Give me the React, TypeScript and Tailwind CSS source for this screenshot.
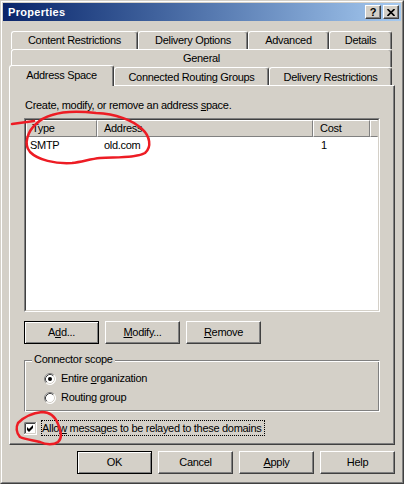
import React from "react";

const raised =
  "border border-t-white border-l-white border-r-[#404040] border-b-[#404040] shadow-[inset_-1px_-1px_0_#808080]";
const defBtn =
  "border border-black shadow-[inset_1px_1px_0_#ffffff,inset_-1px_-1px_0_#808080]";

function Btn({ children, def }: { children: React.ReactNode; def?: boolean }) {
  return (
    <div
      className={`w-[75px] h-[23px] shrink-0 flex items-center justify-center bg-[#d4d0c8] ${
        def ? defBtn : raised
      }`}
    >
      <span>{children}</span>
    </div>
  );
}

function Tab({
  children,
  className,
}: {
  children: React.ReactNode;
  className: string;
}) {
  return (
    <div
      className={`shrink-0 flex justify-center bg-[#d4d0c8] border-t border-l border-r border-t-white border-l-white border-r-[#404040] shadow-[inset_-1px_0_0_#808080] rounded-t-[3px] ${className}`}
    >
      <span>{children}</span>
    </div>
  );
}

function Radio({ checked }: { checked?: boolean }) {
  return (
    <svg width="12" height="12" viewBox="0 0 12 12" className="shrink-0">
      <circle cx="6" cy="6" r="5.5" fill="#ffffff" />
      <path d="M2.11 9.89 A5.5 5.5 0 0 1 9.89 2.11" stroke="#808080" fill="none" />
      <path d="M9.89 2.11 A5.5 5.5 0 0 1 2.11 9.89" stroke="#ffffff" fill="none" />
      <path d="M2.82 9.18 A4.5 4.5 0 0 1 9.18 2.82" stroke="#404040" fill="none" />
      <path d="M9.18 2.82 A4.5 4.5 0 0 1 2.82 9.18" stroke="#d4d0c8" fill="none" />
      {checked && <circle cx="6" cy="6" r="2" fill="#000000" />}
    </svg>
  );
}

function Check() {
  return (
    <svg width="13" height="13" viewBox="0 0 13 13" className="shrink-0">
      <rect x="0" y="0" width="13" height="13" fill="#ffffff" />
      <path d="M0.5 12 V0.5 H12" stroke="#808080" fill="none" />
      <path d="M1.5 11 V1.5 H11" stroke="#404040" fill="none" />
      <path d="M0 12.5 H12.5 V0" stroke="#ffffff" fill="none" />
      <path d="M1 11.5 H11.5 V1" stroke="#d4d0c8" fill="none" />
      <path d="M3 5 L5 7 L9 3 L9 6 L5 10 L3 8 Z" fill="#000000" />
    </svg>
  );
}

export default function App() {
  return (
    <div className="relative w-[404px] h-[484px] bg-[#d4d0c8] text-black text-[11px] leading-[13px] tracking-[-0.3px] font-['Liberation_Sans',Arial,sans-serif]">
      <div className="w-full h-full border border-t-[#d4d0c8] border-l-[#d4d0c8] border-r-[#404040] border-b-[#404040]">
        <div className="w-full h-full border border-t-white border-l-white border-r-[#808080] border-b-[#808080] p-px flex flex-col">
          {/* Title bar */}
          <div className="h-[18px] shrink-0 flex items-center bg-linear-to-r from-[#0a246a] to-[#a6caf0] pl-[5px] pr-[2px]">
            <span className="text-white font-bold tracking-[0.3px]">Properties</span>
            <div className="ml-auto flex gap-[2px]">
              <div className={`w-[16px] h-[14px] flex items-center justify-center bg-[#d4d0c8] ${raised}`}>
                <span className="font-bold text-[11px] leading-[11px] tracking-normal">?</span>
              </div>
              <div className={`w-[16px] h-[14px] flex items-center justify-center bg-[#d4d0c8] ${raised}`}>
                <svg width="8" height="7" viewBox="0 0 8 7">
                  <path d="M0.5 0 L7.5 7 M7.5 0 L0.5 7" stroke="#000" strokeWidth="1.6" />
                </svg>
              </div>
            </div>
          </div>

          {/* Content */}
          <div className="flex-1 flex flex-col px-[6px] pt-[10px]">
            {/* Tab row 1 */}
            <div className="flex h-[18px] ml-[2px]">
              <Tab className="w-[127px] h-[18px] items-center">Content Restrictions</Tab>
              <Tab className="w-[110px] h-[18px] items-center">Delivery Options</Tab>
              <Tab className="w-[81px] h-[18px] items-center">Advanced</Tab>
              <Tab className="w-[63px] h-[18px] items-center">Details</Tab>
            </div>
            {/* Tab row 2 */}
            <div className="flex h-[18px] ml-[2px]">
              <Tab className="w-[381px] h-[18px] items-center">General</Tab>
            </div>
            {/* Tab row 3 */}
            <div className="flex h-[18px] items-start">
              <Tab className="w-[105px] h-[21px] -mt-[2px] relative z-10 items-start pt-[3px]">
                Address Space
              </Tab>
              <Tab className="w-[155px] h-[18px] items-center pt-[2px]">Connected Routing Groups</Tab>
              <Tab className="w-[123px] h-[18px] items-center pt-[2px]">Delivery Restrictions</Tab>
            </div>

            {/* Panel */}
            <div className="w-[386px] h-[360px] shrink-0 flex flex-col pl-[14px] border border-t-white border-l-white border-r-[#404040] border-b-[#404040] shadow-[inset_-1px_-1px_0_#808080]">
              <div className="mt-[13px] h-[13px] pl-px">
                Create, modify, or remove an address <span className="underline">s</span>pace.
              </div>

              {/* List view */}
              <div className="mt-[6px] w-[356px] h-[194px] border border-t-[#808080] border-l-[#808080] border-r-white border-b-white">
                <div className="w-full h-full bg-white flex flex-col border border-t-[#404040] border-l-[#404040] border-r-[#d4d0c8] border-b-[#d4d0c8]">
                  <div className="flex h-[17px] shrink-0">
                    <div className="w-[71px] flex items-center pl-[5px] bg-[#d4d0c8] border border-t-white border-l-white border-r-[#808080] border-b-[#808080]">
                      Type
                    </div>
                    <div className="w-[216px] flex items-center pl-[6px] bg-[#d4d0c8] border border-t-white border-l-white border-r-[#808080] border-b-[#808080]">
                      Address
                    </div>
                    <div className="w-[57px] flex items-center pl-[6px] bg-[#d4d0c8] border border-t-white border-l-white border-r-[#808080] border-b-[#808080]">
                      Cost
                    </div>
                    <div className="flex-1 bg-[#d4d0c8] border border-t-white border-l-white border-r-[#d4d0c8] border-b-[#808080]" />
                  </div>
                  <div className="flex h-[16px] items-center">
                    <div className="w-[71px] pl-[4px]">SMTP</div>
                    <div className="w-[216px] pl-[7px]">old.com</div>
                    <div className="w-[57px] pl-[8px]">1</div>
                  </div>
                </div>
              </div>

              {/* Buttons */}
              <div className="mt-[9px] flex gap-[6px]">
                <Btn def>
                  A<span className="underline">d</span>d...
                </Btn>
                <Btn>
                  <span className="underline">M</span>odify...
                </Btn>
                <Btn>
                  <span className="underline">R</span>emove
                </Btn>
              </div>

              {/* Group box */}
              <div className="mt-[16px] w-[356px] h-[52px] shrink-0 relative pl-[19px] pt-[8px] border border-t-[#808080] border-l-[#808080] border-r-white border-b-white shadow-[inset_1px_1px_0_#ffffff,inset_-1px_-1px_0_#808080]">
                <span className="absolute left-[7px] -top-[8px] px-[2px] bg-[#d4d0c8] leading-[13px]">
                  Connector scope
                </span>
                <div className="h-[19px] flex items-center">
                  <Radio checked />
                  <span className="ml-[5px]">
                    Entire <span className="underline">o</span>rganization
                  </span>
                </div>
                <div className="h-[19px] flex items-center">
                  <Radio />
                  <span className="ml-[5px]">Routing group</span>
                </div>
              </div>

              {/* Checkbox */}
              <div className="mt-[8px] h-[16px] flex items-center">
                <Check />
                <div className="ml-[4px] h-[16px] flex items-center pr-[2px] border border-dotted border-black">
                  <span>
                    Allo<span className="underline">w</span> messages to be relayed to these domains
                  </span>
                </div>
              </div>
            </div>

            {/* Dialog buttons */}
            <div className="mt-[6px] flex justify-end gap-[6px]">
              <Btn def>OK</Btn>
              <Btn>Cancel</Btn>
              <Btn>
                <span className="underline">A</span>pply
              </Btn>
              <Btn>Help</Btn>
            </div>
          </div>
        </div>
      </div>

      {/* Red annotation marks */}
      <svg
        className="absolute inset-0 pointer-events-none"
        width="404"
        height="484"
        viewBox="0 0 404 484"
      >
        <g stroke="#ed1c24" strokeWidth="2.5" fill="none" strokeLinecap="round" strokeLinejoin="round">
          <path d="M12 124 L34 121" />
          <path d="M36 124 C28 131, 23 144, 30 152 C38 160, 55 164, 72 163 C82 162, 90 159, 100 158 C118 157, 136 158, 145 153 C152 147, 150 136, 142 129 C132 120, 115 114, 96 113 C80 111, 64 111, 52 115 C45 117, 40 120, 36 124" />
          <path d="M18 423 C24 417, 32 413, 42 412 C50 412, 55 416, 58 424 C61 431, 63 438, 58 442 C54 445, 46 445, 40 442 C34 440, 26 440, 20 437 C16 433, 16 427, 18 423 Z" />
        </g>
      </svg>
    </div>
  );
}
